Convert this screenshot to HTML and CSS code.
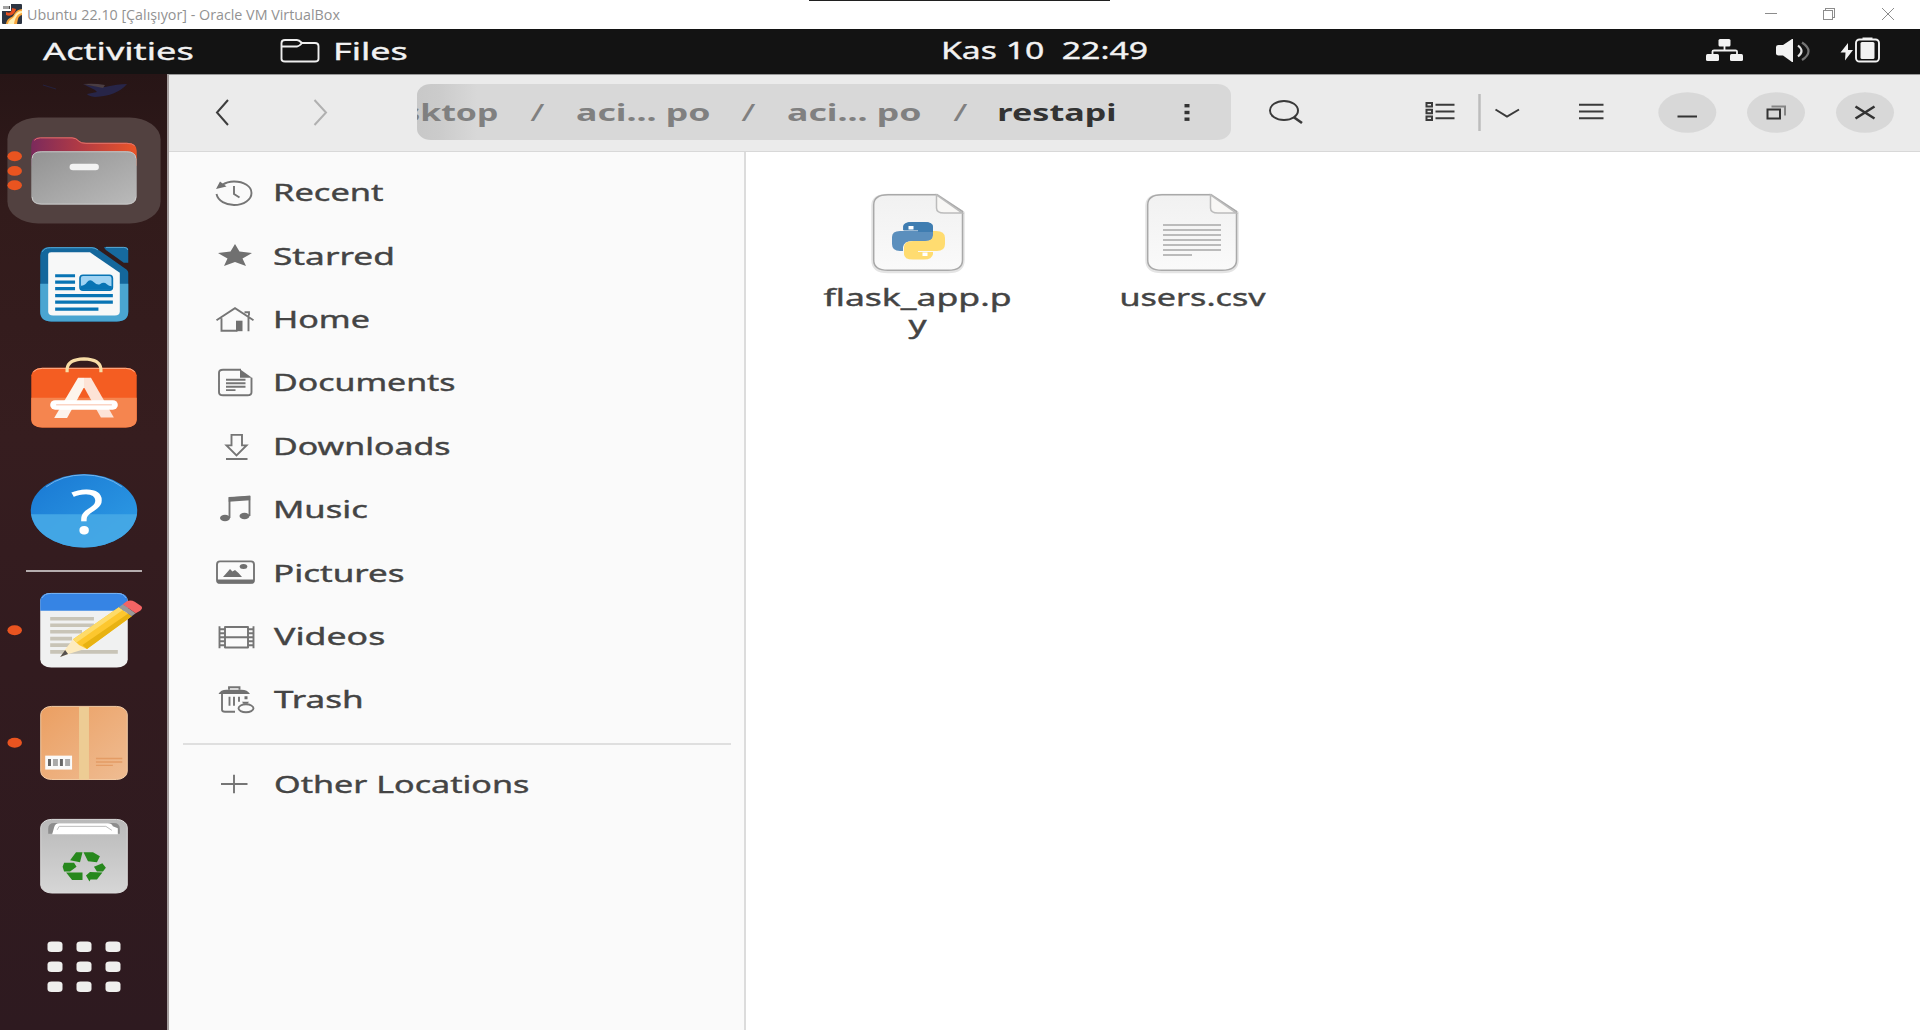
FILE: index.html
```html
<!DOCTYPE html>
<html lang="en">
<head>
<meta charset="utf-8">
<title>Ubuntu 22.10 [Çalışıyor] - Oracle VM VirtualBox</title>
<link rel="stylesheet" href="styles.css">
</head>
<body>
<header class="host-bar">
  <svg class="host-logo" viewBox="0 0 20 20"><rect width="20" height="20" rx="1" fill="#2d3542"/><path d="M4 20C5 14 9 14 11 12C13 9 14 6 20 5V11C16 12 16 15 15 20Z" fill="#f9a63c"/><path d="M6 20C7 15 11 15 12.500 12C14 9 16 7 20 7V9C15 10 13 14 12 20Z" fill="#fff0b4"/><path d="M4 8C8 10 10 8 10 4L14 5C13 10 9 13 4 11Z" fill="#e8501f"/><rect width="9" height="7" fill="#fff"/><path d="M2 2v3M4 2v3M6 2v3M7.500 2v3" stroke="#444" stroke-width="1"/></svg>
  <span class="text host-title">Ubuntu 22.10 [Çalışıyor] - Oracle VM VirtualBox</span>
  <div class="host-handle"></div>
  <svg class="host-controls" viewBox="1740 0 180 29"><g fill="none" stroke="#8c8c8c" stroke-width="1" shape-rendering="crispEdges"><path d="M1765 13.500h12M1823.500 10.500h9v9h-9zM1825.500 10V8.500h9v9H1833"/></g><path d="M1882 8l12 12M1894 8l-12 12" stroke="#8c8c8c" fill="none"/></svg>
</header>

<div class="top-bar">
  <span class="text activities">Activities</span>
  <svg class="app-icon" viewBox="276 29 48 45"><path d="M281.500 44V43Q281.500 40 285 40H297Q299 40 302 43H315Q318.500 43 318.500 46V59Q318.500 61.500 315 61.500H285Q281.500 61.500 281.500 59ZM282 46.500H297Q299 46.500 302 43" fill="none" stroke="#eee" stroke-width="1.900"/></svg>
  <span class="text app-name">Files</span>
  <span class="text clock">Kas 10&nbsp; 22:49</span>
  <svg class="tray" viewBox="1690 29 230 45">
    <g fill="#f2f2f2"><rect x="1718.500" y="39" width="12" height="7.500" rx="1.500"/><rect x="1706" y="54" width="13" height="7" rx="1.500"/><rect x="1730" y="54" width="13" height="7" rx="1.500"/></g>
    <path d="M1724.500 46v5M1712.500 55v-3.500q0-1 1.500-1h21.500q1.500 0 1.500 1V55" fill="none" stroke="#f2f2f2" stroke-width="1.800"/>
    <path d="M1776 47q0-2 2.500-2h4.500l9-6h1v23h-1l-9-6.500h-4.500q-2.500 0-2.500-2z" fill="#f2f2f2"/>
    <path d="M1798 45.500q7 5.500 0 11" fill="none" stroke="#e2e2e2" stroke-width="2.200"/>
    <path d="M1802 42.500q13 8.500 0 17.500" fill="none" stroke="#747474" stroke-width="2.200"/>
    <path d="M1848 43l-7.500 9.500h5l-.5 8 8-10.500h-5z" fill="#f2f2f2"/>
    <path d="M1862.500 39.500v-2h10v2" fill="#f2f2f2"/>
    <rect x="1856" y="39.500" width="23" height="22" rx="3.500" fill="none" stroke="#f2f2f2" stroke-width="1.900"/>
    <rect x="1860.500" y="42" width="14" height="17" rx="1.500" fill="#f2f2f2"/>
  </svg>
</div>

<div class="desktop">
  <nav class="dock">
    <svg class="wallpaper" viewBox="0 74 168 40"><path d="M83 84q9 2 22 3 13-3 22-3-10 12-32 13-7-1-8-3l10-2-2-2z" fill="#272548"/><path d="M83 84q12-1 22 1l-2 3z" fill="#4a3d42"/><path d="M43 85l13 4" stroke="#24213d"/></svg>

    <svg class="slot" viewBox="0 113 168 114">
      <defs>
        <linearGradient id="folder"><stop offset="0" stop-color="#7b2a5c"/><stop offset=".45" stop-color="#b03a45"/><stop offset="1" stop-color="#ea5528"/></linearGradient>
        <linearGradient id="drawer" x2="1" y2="1"><stop offset="0" stop-color="#929292"/><stop offset="1" stop-color="#bababa"/></linearGradient>
      </defs>
      <rect x="7" y="116.500" width="154" height="106.500" rx="31" ry="22" fill="#524140"/>
      <path d="M31 165V144Q31 136.500 40 136.500H72Q76 136.500 79 140Q81 142 86 142H127Q137 142 137 150V165Z" fill="url(#folder)"/>
      <path d="M34 139.500Q36 137 40 137H72Q76 137 79 140.500Q81 142.500 86 142.500H127Q133 142.500 135 145" fill="none" stroke="#e2746a"/>
      <rect x="31" y="150.500" width="106" height="53.500" rx="10" ry="8" fill="url(#drawer)"/>
      <path d="M32 157.500q0-6.500 9-6.500h86q9 0 9 6.500" fill="none" stroke="#c6c6c6"/>
      <path d="M32 196.500q0 7 9 7h86q9 0 9-7" fill="none" stroke="#c8c8c8"/>
      <rect x="69.500" y="163" width="29.500" height="6.500" rx="3.500" fill="#f3f3f3"/>
      <g fill="#e95420"><ellipse cx="14.300" cy="155.500" rx="7.300" ry="5"/><ellipse cx="14.300" cy="170.200" rx="7.300" ry="5"/><ellipse cx="14.300" cy="184.700" rx="7.300" ry="5"/></g>
    </svg>

    <svg class="slot" viewBox="0 227 168 114">
      <path d="M50 247H92Q95 247 98 249.500L127 270Q128.500 271.500 128.500 273V312Q128.500 322 117 322H51Q40 322 40 312V256Q40 247 50 247Z" fill="#14679c"/>
      <path d="M40 284H128.500V312Q128.500 322 117 322H51Q40 322 40 312Z" fill="#4aa5d1"/>
      <path d="M42 252Q44 247.800 50 247.800H92Q95 248 98 250" fill="none" stroke="#56a6d2"/>
      <path d="M105 247H124Q128.500 247 128.500 250V263H124L106 250Q103 247 105 247Z" fill="#166a9f"/>
      <path d="M106 247.500H124Q128 247.500 128 250" stroke="#5aa8d2" fill="none"/>
      <path d="M51 252.500H90L120 273V312Q120 316 115 316H53Q48 316 48 312V255Q48 252.500 51 252.500Z" fill="#f7f8f8"/>
      <path d="M55 276h20M55 282.500h20M55 289h20M55 296h58M55 302.500h58M55 309.500h43.500" stroke="#0874b4" stroke-width="3.200"/>
      <rect x="80" y="275.500" width="32.500" height="15" rx="3" fill="#9fd3f3" stroke="#0874b4" stroke-width="1.700"/>
      <path d="M81 290v-4q4 0 6-3.500 3-4 7 0 3 3 6 2 4-3 7 0 2 2 5 2v3.500z" fill="#0874b4"/>
    </svg>

    <svg class="slot" viewBox="0 341 168 114">
      <rect x="31" y="368" width="106" height="60" rx="11" ry="7.500" fill="#f45d22"/>
      <path d="M31 398H137V420Q137 428 126 428H42Q31 428 31 420Z" fill="#f5854f"/>
      <path d="M33 372q3-3.500 9-3.500h84q6 0 9 3.500" fill="none" stroke="#fcb08e"/>
      <path d="M67 372.500V369Q68 359.500 84 359Q100 359.500 101 369V372.500" fill="none" stroke="#f8dda6" stroke-width="3.200"/>
      <path d="M78 378h6v9.500l-17 31h-13z" fill="#fdf4ec"/><path d="M84 378h7l23 40h-13l-17-30.500z" fill="#fde3d6"/>
      <rect x="50" y="400.500" width="68" height="9.500" rx="5" fill="#fff"/><path d="M56 405.200h56" stroke="#fbd5c5" stroke-width="1.500"/>
    </svg>

    <svg class="slot" viewBox="0 454 168 114">
      <defs><linearGradient id="help" x2="1" y2="1"><stop offset="0" stop-color="#1978d3"/><stop offset="1" stop-color="#2f9ee6"/></linearGradient><clipPath id="help-low"><rect x="20" y="514.500" width="130" height="40"/></clipPath></defs>
      <ellipse cx="84" cy="511" rx="53.500" ry="37" fill="url(#help)"/>
      <ellipse cx="84" cy="511" rx="53.500" ry="37" fill="#46a8e6" clip-path="url(#help-low)" opacity=".9"/>
      <path d="M46 487q16-12 38-12t38 12" fill="none" stroke="#75b4ec"/>
      <text class="question" transform="translate(70.500 534.500) scale(1.240 1)">?</text>
    </svg>

    <div class="dock-line"></div>

    <svg class="slot" viewBox="0 573 168 114">
      <rect x="40" y="592" width="88" height="75" rx="11" ry="8" fill="#f0f1f1"/>
      <path d="M40 610V600Q40 592 51 592H117Q128 592 128 600V610Z" fill="#3684e4"/>
      <path d="M42 597q2-4.500 9-4.500h66q7 0 9 4.500" fill="none" stroke="#7ab4f3"/>
      <path d="M50 618h44M50 624.500h44M50 631h32M50 638h22M50 644.500h22M50 651.300h68" stroke="#c8c4b7" stroke-width="3.600"/>
      <path d="M60 656.500L65 649 73 638.500 88 647.500 70 653Z" fill="#fdebbf"/>
      <path d="M60 656.500L65 649.500 68 653.500Z" fill="#56514f"/>
      <path d="M73 638.500L119 606.500 132 615.500 87 648.500 79 644.500Z" fill="#fdc72e"/><path d="M73 638.500l46-32 4 2.800-46.500 32.500z" fill="#fedb68"/><path d="M87 648.500l-4.500-4.200 46-31.500 3.500 2.700z" fill="#e8b211"/>
      <path d="M119 606.500l4-3 13 9-4 3z" fill="#999"/><path d="M123 603.500l4-3q4-2 8 .5l6 4q3 2-.5 5l-4.500 2.500z" fill="#f46464"/>
      <ellipse cx="14.300" cy="629.500" rx="7.300" ry="5" fill="#e95420"/>
    </svg>

    <svg class="slot" viewBox="0 687 168 114">
      <defs><linearGradient id="box" x2="1" y2="1"><stop offset="0" stop-color="#eb9f62"/><stop offset="1" stop-color="#efbc92"/></linearGradient></defs>
      <rect x="40.500" y="706.500" width="87" height="73.500" rx="11" ry="8" fill="url(#box)" stroke="#f3cda6"/>
      <rect x="79" y="707" width="10" height="73" fill="#edcc94"/>
      <rect x="45" y="756" width="27" height="14" fill="#fafafa"/>
      <path d="M49.300 759.500v7M61.300 759.500v7" stroke="#666" stroke-width="3"/><path d="M55.300 759.500v7M67.500 759.500v7" stroke="#aaa" stroke-width="5"/>
      <path d="M96 759h26.500M96 762.500h26.500M96 765.800h17" stroke="#e49c65" stroke-width="1.500"/>
      <ellipse cx="14.300" cy="743" rx="7.300" ry="5" fill="#e95420"/>
    </svg>

    <svg class="slot" viewBox="0 800 168 114">
      <defs><linearGradient id="bin" x2="0" y2="1"><stop offset="0" stop-color="#b9b9b9"/><stop offset="1" stop-color="#d6d6d6"/></linearGradient></defs>
      <rect x="40.500" y="819.500" width="87" height="74" rx="11" ry="8" fill="url(#bin)" stroke="#dcdcdc"/>
      <path d="M48 834v-5q0-6 6-6h60q6 0 6 6v5z" fill="#8d8d8d"/>
      <path d="M52 834.500l2-7q1-4 5-4h49q4 0 5 3l5 2v6z" fill="#fff"/><path d="M57 830l2-3.500h47l6 4" stroke="#bbb" fill="none"/>
      <path d="M70 860.500L76 852.500H82.500L80 862.500ZM83.500 852.500H93L100 856.500 97 862.500 88 861.500ZM62.500 867L64 863H74L76.500 867 70 872H64ZM94 867L102.500 863.500 106 868 103 872H97ZM66 873H82.500V880.500H72ZM86 876L90 872.500 102.500 873 97 880H90.500L89.500 882Z" fill="#27881d"/>
    </svg>

    <svg class="slot apps" viewBox="0 914 168 116"><g fill="#efefed"><rect x="47.500" y="941.500" width="15" height="10.500" rx="4" ry="3"/><rect x="76.500" y="941.500" width="15" height="10.500" rx="4" ry="3"/><rect x="105.500" y="941.500" width="15" height="10.500" rx="4" ry="3"/><rect x="47.500" y="961.500" width="15" height="10.500" rx="4" ry="3"/><rect x="76.500" y="961.500" width="15" height="10.500" rx="4" ry="3"/><rect x="105.500" y="961.500" width="15" height="10.500" rx="4" ry="3"/><rect x="47.500" y="981.500" width="15" height="10.500" rx="4" ry="3"/><rect x="76.500" y="981.500" width="15" height="10.500" rx="4" ry="3"/><rect x="105.500" y="981.500" width="15" height="10.500" rx="4" ry="3"/></g></svg>
  </nav>

  <main class="window">
    <div class="header-bar">
      <svg class="nav-arrows" viewBox="169 75 248 76"><g fill="none" stroke-width="2"><path d="M228 100L217 112.500 228 125" stroke="#3d3d3d"/><path d="M314.500 100L326 112.500 314.500 125" stroke="#b0b0b0"/></g></svg>
      <div class="path-bar">
        <span class="crumb first"><span class="text">Desktop</span></span>
        <span class="slash"><span class="text">/</span></span>
        <span class="crumb"><span class="text">aci... po</span></span>
        <span class="slash"><span class="text">/</span></span>
        <span class="crumb"><span class="text">aci... po</span></span>
        <span class="slash"><span class="text">/</span></span>
        <span class="crumb current"><span class="text">restapi</span></span>
        <svg class="path-menu" viewBox="1116 84 115 56"><g fill="#333"><rect x="1185.500" y="104" width="5" height="3.400"/><rect x="1185.500" y="110.800" width="5" height="3.400"/><rect x="1185.500" y="117.500" width="5" height="3.400"/></g></svg>
      </div>
      <svg class="header-tools" viewBox="1231 75 689 76">
        <g fill="none" stroke="#3a3a3a" stroke-width="2">
          <ellipse cx="1284" cy="110.500" rx="14" ry="9.500"/><path d="M1293.500 117l8.500 6" stroke-width="2.700"/>
          <path d="M1435.500 104.800h19M1435.500 111.500h19M1435.500 118.300h19M1579 104.800h24.500M1579 111.500h24.500M1579 118.300h24.500"/>
          <path d="M1426.500 103h5.500v3.400h-5.500zM1426.500 109.800h5.500v3.400h-5.500zM1426.500 116.500h5.500v3.400h-5.500z"/>
          <path d="M1495.500 109.500l11.500 7 12-7" stroke-width="2"/>
        </g>
        <path d="M1479.500 94v37" stroke="#bcbcbc" stroke-width="2.500"/>
        <g fill="#d8d8d8"><ellipse cx="1687.300" cy="112.500" rx="29" ry="20.300"/><ellipse cx="1776" cy="112.500" rx="29" ry="20.300"/><ellipse cx="1865" cy="112.500" rx="29" ry="20.300"/></g>
        <g fill="none" stroke="#333" stroke-width="2"><path d="M1677.500 116.500h19.500M1767.500 109.500h12.500v9h-12.500z"/><path d="M1771.500 106.500h13.500v9" stroke="#858585"/><path d="M1855.500 106.500l19 12M1874.500 106.500l-19 12" stroke-width="2.600"/></g>
      </svg>
    </div>

    <div class="panes">
      <aside class="sidebar">
        <div class="place"><svg viewBox="212 160 48 63.400"><path d="M216.500 194C218 201 226 205 234 205C244 205 251.500 199.500 251.500 193C251.500 186.500 244 181.500 234 181.500C229 181.500 225 183 222 185M234 186v8l5.500 3.500" class="line"/><path d="M220 181.500l6.500 5-10.500 2.500z" class="solid"/></svg><span class="text recent">Recent</span></div>
        <div class="place"><svg viewBox="212 223.400 48 63.400"><path d="M235 244.500l4.500 7.500 12.500 1.500-9.500 5.500 3.500 7.500-11-4-11 4 3.500-7.500-9.500-5.500 12.500-1.500z" class="solid"/></svg><span class="text starred">Starred</span></div>
        <div class="place"><svg viewBox="212 286.800 48 63.400"><path d="M216.500 320L235 308l18.500 12M221.500 318v12.500h16M248.500 315v16M244.500 312h4.500v3" class="line"/><path d="M236 320.500h6.500v10.500H236z" class="solid"/></svg><span class="text home">Home</span></div>
        <div class="place"><svg viewBox="212 350.200 48 63.400"><path d="M241 370H223q-4 0-4 3v19.500q0 3 4 3h24.500q4 0 4-3V378M226 380h19.500M226 383.500h19.500M226 387h19.500M226 390.300h9.500" class="line"/><path d="M240 369.500l12 8.500h-12z" class="solid"/></svg><span class="text documents">Documents</span></div>
        <div class="place"><svg viewBox="212 413.600 48 63.400"><path d="M231.500 434.500h10.500v10.500h4.500L236.500 455 226.500 445h5zM226 458.600h21.500" class="line"/></svg><span class="text downloads">Downloads</span></div>
        <div class="place"><svg viewBox="212 477 48 63.400"><path d="M229.500 518v-20l20-1v19" class="line"/><path d="M228.700 497.500l21.500-2v4.800l-21.500 1.500z" class="solid"/><ellipse cx="225" cy="518" rx="5" ry="3.200" class="solid"/><ellipse cx="244.500" cy="516" rx="5" ry="3.200" class="solid"/></svg><span class="text music">Music</span></div>
        <div class="place"><svg viewBox="212 540.400 48 63.400"><rect x="217" y="561.800" width="37" height="21.500" rx="3" class="line"/><path d="M217 580h37v2q0 2-4 2h-29q-4 0-4-2zM223 577.500l4-4.500 3-3.500 2.500 2.500 2.500-1.500 3.500 3 3.500 4z" class="solid"/><ellipse cx="243.500" cy="567" rx="3.800" ry="2.500" class="solid"/></svg><span class="text pictures">Pictures</span></div>
        <div class="place"><svg viewBox="212 603.800 48 63.400"><path d="M219.500 626v22M225 626v22M248 626v22M253.500 626v22M225 626.800h23M225 637h23M225 647.300h23M219 629h6M219 633h6M219 637h6M219 641h6M219 645h6M248 629h6M248 633h6M248 637h6M248 641h6M248 645h6" class="line"/></svg><span class="text videos">Videos</span></div>
        <div class="place"><svg viewBox="212 667.200 48 63.400"><path d="M229 690v-2.500h10.500v2.500M222 694v16q0 2 3 2h10M229.500 697v9M234 697v9M239 697v5" class="line"/><path d="M218.500 694.300q2-4.300 8-4.300h15q6 0 8.500 4.300zM244.500 696.500h3v3h-3zM242 702h7l-1.500 2h-4z" class="solid"/><ellipse cx="246" cy="708.500" rx="7.500" ry="4" class="line"/></svg><span class="text trash">Trash</span></div>
        <hr class="divider">
        <div class="place"><svg viewBox="212 751.800 48 63.400"><path d="M234 774.500v18.500M221 783.800h26.500" class="line"/></svg><span class="text other">Other Locations</span></div>
      </aside>

      <section class="files">
        <figure class="file">
          <svg viewBox="869 189 100 88">
            <use href="#sheet"/>
            <path d="M904 232V226Q905 222 913 222H925Q934 222 934 227V236Q934 241 927 241H913Q905 241 904 247V251H901Q893 251 893 244V237Q893 231 901 231H919V230H904Z" fill="#5b8fbd"/>
            <path d="M904.500 231.500V227Q905 222 913 222H925Q934 222 934 227V232H919V230.500H904.500Z" fill="#3f7db1"/>
            <path d="M934 231H937Q946 231 946 238V244Q946 251 938 251H919V252H934V254Q933 259.500 925 259.500H914Q905 259.500 905 254V247Q905 241 914 241H926Q934 241 934 235Z" fill="#ffdc70"/>
            <path d="M909.500 226h5v3.500h-5zM923.500 252.500h5v3.500h-5z" fill="#fff"/>
          </svg>
          <figcaption class="text flask">flask_app.p<br>y</figcaption>
        </figure>
        <figure class="file">
          <svg viewBox="869 189 100 88">
            <defs>
              <linearGradient id="paper" x2="0" y2="1"><stop offset="0" stop-color="#f1f1f1"/><stop offset="1" stop-color="#fafafa"/></linearGradient>
              <g id="sheet"><path d="M874 206Q874 195.500 889 195.500H938L964 213V260Q964 271.500 949 271.500H889Q874 271.500 874 260Z" fill="none" stroke="#e4e4e4" stroke-width="3.500"/><path d="M874.700 205Q874.700 194.700 889 194.700H938L963.500 211.500V260Q963.500 270.300 949 270.300H889Q874.700 270.300 874.700 260Z" fill="url(#paper)" stroke="#a9a9a9" stroke-width="1.500"/><path d="M937.500 195V208Q937.500 213 945 213H963Z" fill="#f8f7f5" stroke="#bcbcbc" stroke-width="1.500"/></g>
            </defs>
            <use href="#sheet"/>
            <path d="M890 225h58M890 230h58M890 235h58M890 240h58M890 245h58M890 250h58M890 255h29" stroke="#bbb" stroke-width="1.900"/>
          </svg>
          <figcaption class="text users">users.csv</figcaption>
        </figure>
      </section>
    </div>
  </main>
</div>
</body>
</html>
```
FILE: styles.css
```css
* { box-sizing: border-box; }
html, body { margin: 0; height: 100%; overflow: hidden; }
body {
  width: 1920px;
  height: 1030px;
  display: flex;
  flex-direction: column;
  font: 24px/33px "Noto Sans", "Open Sans", sans-serif;
  color: #444;
  background: #fff;
}
svg { display: block; flex: none; }

/* The guest display is wider than its native ratio, so labels are stretched. */
.text {
  display: block;
  flex: none;
  white-space: nowrap;
  transform-origin: 0 50%;
  transform: scaleX(var(--sx, 1.44));
}

/* Host window title bar */
.host-bar {
  height: 29px;
  flex: none;
  display: flex;
  align-items: flex-start;
  padding-left: 2px;
  background: #fff;
}
.host-logo { width: 20px; height: 20px; margin-top: 4px; }
.host-title {
  --sx: .953;
  width: 340px;
  margin: 4px 0 0 5px;
  font: 15px/20px "Open Sans", "Noto Sans", sans-serif;
  color: #929292;
}
.host-handle { width: 301px; height: 1px; margin-left: 442px; background: #202020; }
.host-controls { width: 180px; height: 29px; margin-left: auto; }

/* Guest top bar */
.top-bar {
  height: 45px;
  flex: none;
  display: flex;
  align-items: flex-start;
  background: #131313;
  color: #f2f2f2;
  -webkit-text-stroke: .35px currentColor;
}
.activities { --sx: 1.508; width: 233px; margin: 5px 0 0 43px; }
.app-icon { width: 48px; height: 45px; }
.app-name { --sx: 1.499; width: 607px; margin: 5px 0 0 9px; }
.clock { --sx: 1.405; margin: 4px 0 0 1px; }
.tray { width: 230px; height: 45px; margin-left: auto; }

.desktop { flex: 1; display: flex; min-height: 0; }

/* Dock */
.dock {
  width: 167px;
  flex: none;
  display: flex;
  flex-direction: column;
  background: linear-gradient(180deg, #271516 0, #321b1b 14%, #361d1f 38%, #321b1f 62%, #2e1a20 100%);
}
.dock > svg { width: 168px; }
.dock .wallpaper { height: 40px; }
.slot { height: 113.400px; }
.dock .apps { height: 116px; }
.dock-line { width: 116px; height: 2px; flex: none; margin: 2px 0 2px 26px; background: #b5adae; }
.question { font: 62px "Noto Sans", sans-serif; fill: #fff; }

/* File manager window */
.window {
  flex: 1;
  display: flex;
  flex-direction: column;
  min-width: 0;
  border-left: 2px solid #a49d9d;
  border-top: 1px solid #989898;
}
.header-bar {
  height: 77px;
  flex: none;
  display: flex;
  align-items: flex-start;
  background: #ebebeb;
  border-bottom: 1.500px solid #d8d8d8;
}
.nav-arrows { width: 248px; height: 76px; }
.path-bar {
  width: 814px;
  height: 56px;
  flex: none;
  display: flex;
  align-items: center;
  margin-top: 9px;
  border-radius: 14px / 11px;
  overflow: hidden;
  background: linear-gradient(90deg, #c8c8c8 0, #cbcbcb 22px, #d8d8d8 60px);
}
.crumb, .slash {
  display: flex;
  justify-content: center;
  flex: none;
  padding-bottom: 2px;
  color: #808080;
}
.crumb .text, .slash .text { transform-origin: 50% 50%; }
.crumb { --sx: 1.485; width: 133px; font-weight: 700; }
.crumb.first { --sx: 1.410; width: 81px; justify-content: flex-end; overflow: hidden; }
.crumb.first .text { transform-origin: 100% 50%; }
.crumb.current { --sx: 1.422; width: 116px; color: #333; }
.slash { --sx: 1.600; width: 78.400px; }
.path-menu { width: 115px; height: 56px; }
.header-tools { width: 689px; height: 76px; }

.panes { flex: 1; display: flex; min-height: 0; }

/* Places sidebar */
.sidebar {
  width: 577px;
  flex: none;
  padding-top: 8px;
  background: #fafafa;
  border-right: 2px solid #dcdcdc;
  -webkit-text-stroke: .4px currentColor;
}
.place { height: 63.400px; display: flex; align-items: center; padding-left: 43px; }
.place svg { width: 48px; height: 63.400px; margin-right: 13px; }
.line { fill: none; stroke: #757575; stroke-width: 1.900; }
.solid { fill: #707070; }
.divider { width: 548px; height: 2px; margin: 12px 0 7px 14px; border: 0; background: #dfdfdf; }
.recent { --sx: 1.435; }
.starred { --sx: 1.470; }
.home { --sx: 1.420; }
.documents { --sx: 1.411; }
.downloads { --sx: 1.412; }
.music { --sx: 1.440; }
.pictures { --sx: 1.458; }
.videos { --sx: 1.485; margin-left: 1px; }
.trash { --sx: 1.460; margin-left: 1px; }
.other { --sx: 1.421; margin-left: .5px; }

/* Icon grid */
.files {
  flex: 1;
  display: flex;
  align-items: flex-start;
  padding: 37px 0 0 35px;
  background: #fff;
  -webkit-text-stroke: .4px currentColor;
}
.file {
  width: 274px;
  margin: 0;
  display: flex;
  flex-direction: column;
  align-items: center;
}
.file svg { width: 100px; height: 88px; }
.file .text { margin-top: 6px; line-height: 27px; text-align: center; transform-origin: 50% 50%; }
.flask { --sx: 1.480; }
.users { --sx: 1.420; }
```
